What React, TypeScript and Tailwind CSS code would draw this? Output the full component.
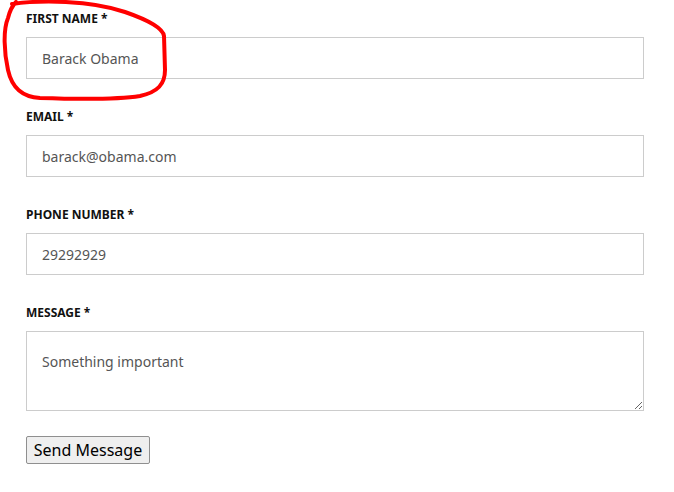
import React from "react";

const fields = [
  { label: "First name", value: "Barack Obama" },
  { label: "Email", value: "barack@obama.com" },
  { label: "Phone number", value: "29292929" },
];

export default function App() {
  return (
    <div className="relative min-h-[492px] w-[674px] bg-white px-[26px] pt-[10px] font-['Noto_Sans','Open_Sans',sans-serif]">
      <form className="flex w-[618px] flex-col" onSubmit={(e) => e.preventDefault()}>
        {fields.map((field) => (
          <div key={field.label} className="mb-[29px] flex flex-col">
            <label className="mb-[9px] h-[18px] text-[12px] leading-[18px] font-bold uppercase text-[#111]">
              {field.label} *
            </label>
            <input
              readOnly
              value={field.value}
              className="h-[42px] w-full border border-[#ccc] bg-white px-[15px] text-[14px] text-[#555] outline-none"
            />
          </div>
        ))}
        <div className="mb-[25px] flex flex-col">
          <label className="mb-[9px] h-[18px] text-[12px] leading-[18px] font-bold uppercase text-[#111]">
            Message *
          </label>
          <textarea
            readOnly
            value="Something important"
            className="h-[80px] w-full border border-[#ccc] bg-white px-[15px] pt-[20px] text-[14px] leading-[20px] text-[#555] outline-none"
          />
        </div>
        <div>
          <button
            type="submit"
            className="h-[28px] w-[124px] rounded-[2px] border border-[#8f8f8f] bg-[#efefef] text-[16px] leading-[26px] text-black"
          >
            Send Message
          </button>
        </div>
      </form>

      <svg
        className="pointer-events-none absolute left-0 top-0"
        width="180"
        height="105"
        viewBox="0 0 180 105"
        fill="none"
      >
        <path
          d="M 12 4 C 40 0, 90 0, 125 12 C 148 20, 163 28, 164 36 L 165 70 C 165 84, 158 92, 140 96 C 115 100, 70 99, 40 98 C 22 97, 12 88, 8 70 C 4 52, 3 30, 8 18 C 10 10, 12 6, 16 2"
          stroke="#ff0000"
          strokeWidth="4"
          strokeLinecap="round"
        />
      </svg>
    </div>
  );
}
